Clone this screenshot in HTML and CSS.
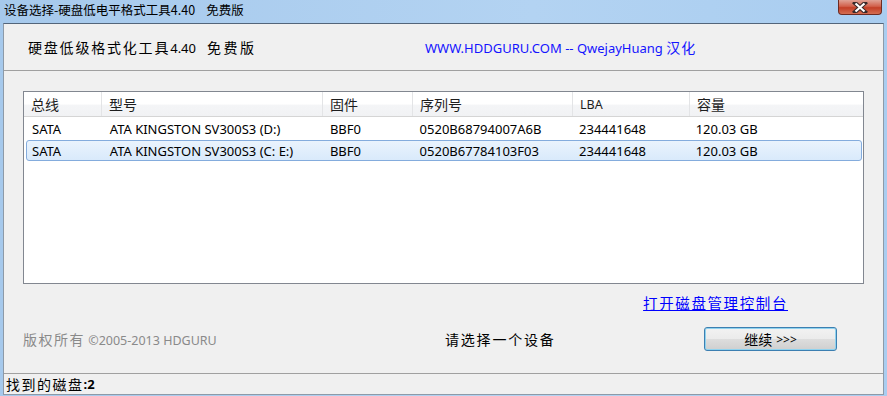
FILE: index.html
```html
<!DOCTYPE html>
<html>
<head>
<meta charset="utf-8">
<link rel="stylesheet" href="styles.css">
</head>
<body>
<div class="window">
  <div class="titlebar">
    <span class="title">设备选择-硬盘低电平格式工具4.40&nbsp;&nbsp;&nbsp;&nbsp;免费版</span>
    <div class="close"><svg width="18" height="11" viewBox="0 0 18 11"><path d="M4 1 L14 10 M14 1 L4 10" stroke="#3a2a2a" stroke-width="4.2" stroke-linecap="square"/><path d="M4.5 1.5 L13.5 9.5 M13.5 1.5 L4.5 9.5" stroke="#ffffff" stroke-width="2.2"/></svg></div>
  </div>
  <div class="client">
    <div class="header">
      <span class="apptitle"><span class="cjk">硬盘低级格式化工具</span><span class="lat">4.40</span><span class="cjk sp">免费版</span></span>
      <span class="site">WWW.HDDGURU.COM -- QwejayHuang <span class="cjk2">汉化</span></span>
    </div>
    <div class="main">
      <div class="listview">
        <div class="lv-head">
          <div class="c c1 hc">总线</div>
          <div class="c c2 hc">型号</div>
          <div class="c c3 hc">固件</div>
          <div class="c c4 hc">序列号</div>
          <div class="c c5 hc lat">LBA</div>
          <div class="c c6 hc last">容量</div>
        </div>
        <div class="row">
          <div class="c c1">SATA</div>
          <div class="c c2">ATA KINGSTON SV300S3 (D:)</div>
          <div class="c c3">BBF0</div>
          <div class="c c4">0520B68794007A6B</div>
          <div class="c c5">234441648</div>
          <div class="c c6">120.03 GB</div>
        </div>
        <div class="row sel">
          <div class="c c1">SATA</div>
          <div class="c c2">ATA KINGSTON SV300S3 (C: E:)</div>
          <div class="c c3">BBF0</div>
          <div class="c c4">0520B67784103F03</div>
          <div class="c c5">234441648</div>
          <div class="c c6">120.03 GB</div>
        </div>
      </div>
      <div class="linkrow"><a class="link" href="#">打开磁盘管理控制台</a></div>
      <div class="bottomrow">
        <span class="copy"><span class="cjk">版权所有</span> <span class="lat">©2005-2013 HDGURU</span></span>
        <span class="prompt">请选择一个设备</span>
        <button class="btn"><span class="cjk">继续</span> <span class="lat">&gt;&gt;&gt;</span></button>
      </div>
    </div>
    <div class="status"><span class="cjk">找到的磁盘</span><span class="lat b">:2</span></div>
  </div>
</div>
</body>
</html>
```
FILE: styles.css
```css
html, body { margin: 0; padding: 0; }
body { width: 887px; height: 396px; overflow: hidden; background: #a9cbec; font-family: "Noto Sans", "Noto Sans CJK SC", sans-serif; }
.window { width: 887px; height: 396px; display: flex; flex-direction: column; background: linear-gradient(90deg, #a6c9ec, #b3d3f2 60%, #a9cdf0); }
.titlebar { height: 23px; position: relative; display: flex; align-items: flex-start; }
.title { font-family: "Noto Sans CJK SC", sans-serif; font-size: 12.5px; color: #000; padding: 1px 0 0 4px; line-height: 17px; white-space: pre; }
.close { position: absolute; left: 838px; top: 0; width: 44px; height: 15px; border: 1px solid #6d2b22; border-top: none; border-radius: 0 0 4px 4px; box-sizing: border-box; background: linear-gradient(#e0a295, #d2614c 45%, #c33f27 55%, #d46e52); display: flex; justify-content: center; align-items: center; }
.client { flex: 1; margin: 0 3px 1px 3px; border-top: 1px solid #53657a; border-left: 1px solid #8d9aa8; border-right: 1px solid #8d9aa8; border-bottom: 1px solid #8d9aa8; background: #f0f0f0; display: flex; flex-direction: column; }
.header { height: 47px; border-bottom: 1px solid #a0a0a0; display: flex; align-items: center; box-sizing: border-box; padding-left: 24px; }
.cjk { font-family: "Noto Sans CJK SC", sans-serif; }
.cjk2 { font-family: "Noto Sans CJK SC", sans-serif; font-size: 14px; letter-spacing: 1px; }
.lat { font-family: "Noto Sans", sans-serif; }
.apptitle { font-size: 14px; color: #000; width: 397px; }
.apptitle .cjk { letter-spacing: 1.8px; }
.apptitle .lat { font-size: 13px; margin-right: 11px; }
.apptitle .sp { letter-spacing: 2.5px; }
.site { color: #1414ff; font-size: 13px; }
.main { flex: 1; padding: 20px 19px 0 19px; display: flex; flex-direction: column; }
.listview { height: 193px; border: 1px solid #828790; background: #fff; box-sizing: border-box; }
.lv-head { height: 24px; display: flex; background: linear-gradient(#ffffff, #ffffff 50%, #f4f5f7 55%, #f1f2f4); border-bottom: 1px solid #d5d5d5; }
.c { box-sizing: border-box; padding-left: 7px; font-size: 13px; white-space: nowrap; display: flex; align-items: center; color: #000; }
.hc { font-family: "Noto Sans CJK SC", sans-serif; font-size: 14px; border-right: 1px solid #e3e4e6; color: #1e1e1e; }
.hc.lat { font-family: "Noto Sans", sans-serif; font-size: 12.5px; }
.hc.last { flex: 1; border-right: none; }
.c1 { width: 78px; }
.c2 { width: 221px; }
.c3 { width: 90px; }
.c4 { width: 160px; }
.c5 { width: 117px; }
.c6 { width: 173px; }
.row { height: 21px; display: flex; margin: 1px 1px 0 2px; border: 1px solid transparent; box-sizing: border-box; }
.row .c1 { width: 76px; padding-left: 5px; }
.row.sel { background: linear-gradient(#eaf3fd, #d9eafb); border-color: #84acdd; border-radius: 3px; }
.linkrow { height: 37px; display: flex; justify-content: flex-end; align-items: center; padding-right: 76px; }
.link { font-family: "Noto Sans CJK SC", sans-serif; font-size: 14.5px; letter-spacing: 1.6px; color: #0000ff; text-decoration: underline; }
.bottomrow { height: 36px; display: flex; align-items: center; }
.copy { color: #8a8a8a; font-size: 12.5px; width: 422px; }
.copy .cjk { font-size: 14px; letter-spacing: 1.5px; }
.prompt { font-family: "Noto Sans CJK SC", sans-serif; font-size: 14px; letter-spacing: 1.8px; color: #000; width: 259px; }
.btn { width: 133px; height: 24px; border: 1px solid #3c7fb1; border-radius: 3px; box-shadow: inset 0 0 0 1px #8fd2ee; font-size: 12px; padding: 0; color: #000; display: flex; align-items: center; justify-content: center; gap: 4px; background: linear-gradient(#f2f2f2, #ebebeb 50%, #dddddd 51%, #cfcfcf); }
.btn .cjk { font-size: 14px; }
.status { height: 20px; margin-top: auto; border-top: 1px solid #a0a0a0; display: flex; align-items: center; padding-left: 2px; font-size: 14px; color: #000; }
.status .cjk { letter-spacing: 1.5px; }
.status .b { font-weight: bold; font-size: 13px; }
```
